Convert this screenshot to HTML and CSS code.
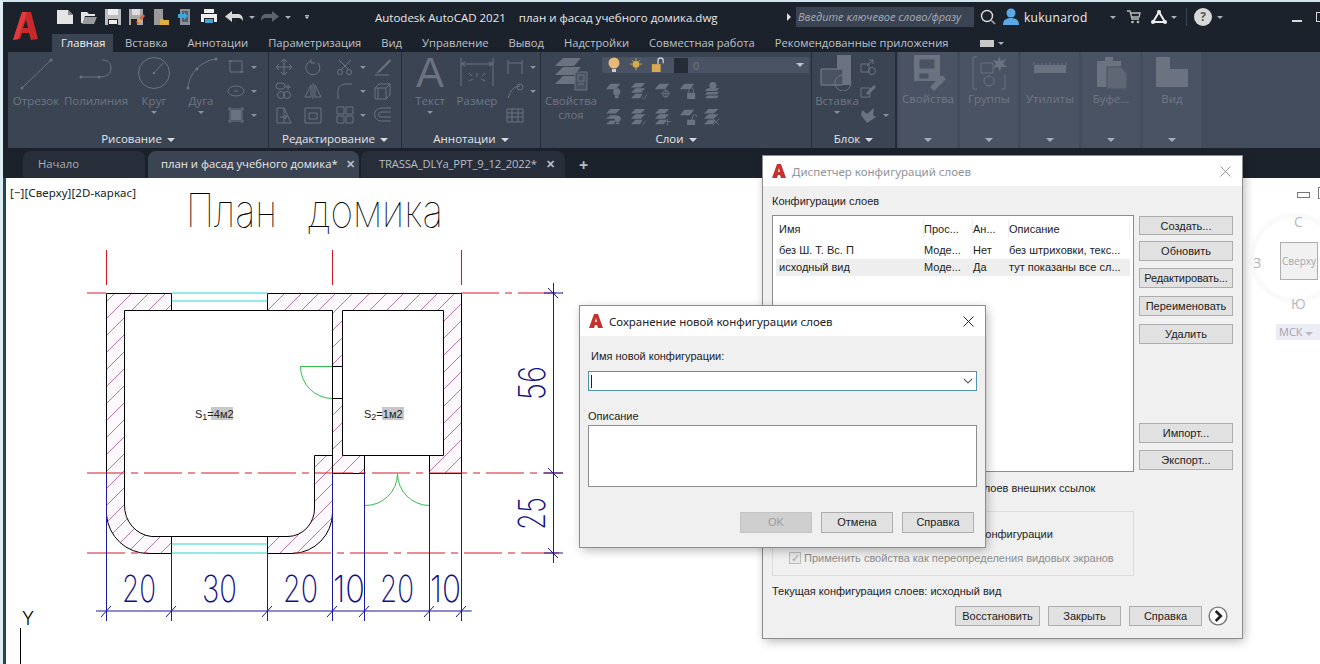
FILE: index.html
```html
<!DOCTYPE html>
<html lang="ru">
<head>
<meta charset="utf-8">
<title>Autodesk AutoCAD 2021</title>
<link rel="stylesheet" href="styles.css">
</head>
<body>
<div class="app">
  <header class="titlebar">
    <svg class="logo" viewBox="0 0 28 30"><path d="M10 1h9l7 27-7 1-2-7h-7l-2 6-7 1z" fill="#c62a2a"/><path d="M10 1h5L6 28l-5 1z" fill="#e23b3b"/><path d="M11 17h5l-2-8z" fill="#1c222c"/></svg>
    <div class="qat">
      <svg class="qi" viewBox="0 0 16 16"><path d="M0 1h11l5 5v9H0z" fill="#e4e4e4"/><path d="M11 1v5h5z" fill="#888"/></svg>
      <svg class="qi" viewBox="0 0 16 16"><path d="M0 3h6l2 2h6v2H4L2 14H0z" fill="#e4e4e4"/><path d="M4 8h12l-3 7H1z" fill="#9a9a9a"/></svg>
      <svg class="qi" viewBox="0 0 16 16"><path d="M0 0h16v16H0z" fill="#bdbdbd"/><path d="M3 0h10v6H3z" fill="#eee"/><path d="M3 10h10v6H3z" fill="#222"/><path d="M4 11h8v4H4z" fill="#eee"/></svg>
      <svg class="qi" viewBox="0 0 16 16"><path d="M0 0h14v16H0z" fill="#a8a8a8"/><path d="M3 0h8v6H3z" fill="#ddd"/><path d="M2 10h6v6H2z" fill="#222"/><path d="M7 13l7-8 2 2-7 8z" fill="#d9634a"/><path d="M10 9l3 3-2 2-3-2z" fill="#e0b060"/></svg>
      <svg class="qi" viewBox="0 0 16 16"><path d="M1 0h9v16H1z" fill="#9a9a9a"/><path d="M7 10h3l1 1h5v5H7z" fill="#e3ac3c"/></svg>
      <svg class="qi" viewBox="0 0 16 16"><path d="M3 0h10v16H3z" fill="#8a9099"/><path d="M5 2h6v11H5z" fill="#565d68"/><path d="M1 5h6V3l4 4-4 4V9H1z" fill="#3aa7dc"/></svg>
      <svg class="qi" viewBox="0 0 16 16"><path d="M3 0h10v4H3zM0 5h16v8H0z" fill="#eee"/><path d="M3 9h10v6H3z" fill="#1c222c"/><path d="M4 10h8v4H4z" fill="#4aa3cc"/></svg>
      <svg class="qi-wide" viewBox="0 0 18 12"><path d="M7 0v3h6c3 0 5 2 5 7-2-3-3-3-5-3H7v4L0 5.500z" fill="#d9d9d9"/></svg>
      <span class="caret light"></span>
      <svg class="qi-wide" viewBox="0 0 18 12"><path d="M11 0v3H5C2 3 0 5 0 10c2-3 3-3 5-3h6v4l7-5.500z" fill="#5d6470"/></svg>
      <span class="caret light"></span>
      <svg class="qi-menu" viewBox="0 0 10 10"><path d="M0 0h10v2H0z" fill="#ddd"/><path d="M0 4h10L5 10z" fill="#ddd"/></svg>
    </div>
    <div class="app-title"><span>Autodesk AutoCAD 2021</span><span>план и фасад учебного домика.dwg</span></div>
    <div class="search-wrap">
      <span class="play"></span>
      <div class="search">Введите ключевое слово/фразу</div>
      <svg class="tb-search" viewBox="0 0 16 16"><circle cx="7" cy="7" r="5.500" fill="none" stroke="#ddd" stroke-width="1.400"/><path d="M11 11l4 4" stroke="#aaa" stroke-width="1.600"/></svg>
      <svg class="tb-user" viewBox="0 0 18 18"><circle cx="9" cy="5" r="4.500" fill="#5aa9e6"/><path d="M1 17c0-5 3-7 8-7s8 2 8 7z" fill="#5aa9e6"/></svg>
      <span class="username">kukunarod</span>
      <span class="caret light user-caret"></span>
      <svg class="tb-cart" viewBox="0 0 14 14"><path d="M0 1h3l2 8h7M4 3h9l-1 4H5" fill="none" stroke="#bbb" stroke-width="1.300"/><circle cx="5.500" cy="12" r="1.300" fill="#bbb"/><circle cx="11" cy="12" r="1.300" fill="#bbb"/></svg>
      <svg class="tb-a360" viewBox="0 0 16 14"><path d="M8 2L2 12h12z" fill="none" stroke="#eee" stroke-width="2"/><circle cx="8" cy="2" r="2" fill="#eee"/><circle cx="2" cy="12" r="2" fill="#eee"/><circle cx="14" cy="12" r="2" fill="#eee"/></svg>
      <span class="caret light"></span>
      <span class="tb-sep"></span>
      <span class="help">?</span>
      <span class="caret light"></span>
      <span class="win-min"></span>
      <span class="win-max"></span>
    </div>
  </header>

  <nav class="ribbon-tabs">
    <span class="rtab active">Главная</span>
    <span class="rtab">Вставка</span>
    <span class="rtab">Аннотации</span>
    <span class="rtab">Параметризация</span>
    <span class="rtab">Вид</span>
    <span class="rtab">Управление</span>
    <span class="rtab">Вывод</span>
    <span class="rtab">Надстройки</span>
    <span class="rtab">Совместная работа</span>
    <span class="rtab">Рекомендованные приложения</span>
    <span class="rtab-extra"><span class="rtab-icon"></span><span class="caret light"></span></span>
  </nav>

  <section class="ribbon">
    <div class="panel p-draw">
      <div class="panel-body">
        <div class="tool w56"><svg class="big" viewBox="0 0 36 36"><path d="M4 33L33 5"/><circle cx="4" cy="33" r="1.500" class="f"/><circle cx="33" cy="5" r="1.500" class="f"/></svg><span class="lbl">Отрезок</span></div>
        <div class="tool w64"><svg class="big" viewBox="0 0 36 36"><path d="M3 22h18c8 0 12-3 12-9s-4-8-9-8"/><circle cx="3" cy="22" r="1.500" class="f"/><circle cx="21" cy="22" r="1.500" class="f"/></svg><span class="lbl">Полилиния</span></div>
        <div class="tool w52"><svg class="big" viewBox="0 0 36 36"><circle cx="18" cy="18" r="15.500"/><path d="M18 18L27 8"/><circle cx="18" cy="18" r="1.300" class="f"/></svg><span class="lbl">Круг</span><span class="caret"></span></div>
        <div class="tool w42"><svg class="big" viewBox="0 0 36 36"><path d="M5 33C6 18 18 6 33 4"/><circle cx="5" cy="33" r="1.500" class="f"/><circle cx="33" cy="4" r="1.500" class="f"/><circle cx="14" cy="14" r="1.500" class="f"/></svg><span class="lbl">Дуга</span><span class="caret"></span></div>
        <div class="small-col draw-small">
          <div class="srow"><svg class="sm" viewBox="0 0 18 18"><path d="M3 3h12v11H3zM1 3h4M13 14h4"/></svg><span class="caret"></span></div>
          <div class="srow"><svg class="sm" viewBox="0 0 18 18"><ellipse cx="9" cy="9" rx="8" ry="5"/><path d="M7 9h4"/></svg><span class="caret"></span></div>
          <div class="srow"><svg class="sm" viewBox="0 0 18 18"><path d="M3 1v16M15 1v16M1 3h16M1 15h16"/><path d="M4 4h10v10H4z" class="f"/></svg><span class="caret"></span></div>
        </div>
      </div>
      <div class="panel-title">Рисование <span class="caret title-caret"></span></div>
    </div>

    <div class="panel p-edit">
      <div class="panel-body">
        <div class="edit-grid">
          <svg class="sm" viewBox="0 0 18 18"><path d="M9 1v16M1 9h16M9 1L6 4M9 1l3 3M9 17l-3-3M9 17l3-3M1 9l3-3M1 9l3 3M17 9l-3-3M17 9l-3 3"/></svg>
          <svg class="sm" viewBox="0 0 18 18"><path d="M14 5a7 7 0 1 1-7-2M7 1v4h4"/></svg>
          <div class="srow"><svg class="sm" viewBox="0 0 18 18"><path d="M3 2l10 10M15 2L5 12"/><circle cx="4" cy="14" r="2.500"/><circle cx="13" cy="14" r="2.500"/></svg><span class="caret"></span></div>
          <svg class="sm" viewBox="0 0 18 18"><path d="M16 1L5 12l-3 4 4-2L17 3z" class="f"/><path d="M1 17h14"/></svg>

          <svg class="sm" viewBox="0 0 18 18"><rect x="1" y="1" width="9" height="6" rx="3"/><circle cx="6" cy="13" r="3.500"/><circle cx="12" cy="13" r="3.500"/><path d="M13 2v6M10 5h6"/></svg>
          <svg class="sm" viewBox="0 0 18 18"><path d="M9 1v16M7 3L1 15h6zM11 3l6 12h-6z"/></svg>
          <div class="srow"><svg class="sm" viewBox="0 0 18 18"><path d="M2 17V9c0-5 4-7 8-7h6"/></svg><span class="caret"></span></div>
          <svg class="sm" viewBox="0 0 18 18"><path d="M1 6h11v11H1zM1 6l4-4h11v11l-4 4M12 6l4-4M4 6v11"/></svg>

          <svg class="sm" viewBox="0 0 18 18"><path d="M2 2h7v15H2zM9 2l7 15H9M5 11h7M10 9l2 2-2 2"/></svg>
          <svg class="sm" viewBox="0 0 18 18"><path d="M1 2h16v15H1zM5 7h8v6H5v-6"/></svg>
          <div class="srow"><svg class="sm" viewBox="0 0 18 18"><path d="M1 1h7v7H1zM10 1h7v7h-7zM1 10h7v7H1zM10 10h7v7h-7z"/></svg><span class="caret"></span></div>
          <svg class="sm" viewBox="0 0 18 18"><path d="M17 2H7a6 6 0 0 0 0 13h10M17 6H7a2.500 2.500 0 0 0 0 5h10"/></svg>
        </div>
      </div>
      <div class="panel-title">Редактирование <span class="caret title-caret"></span></div>
    </div>

    <div class="panel p-annot">
      <div class="panel-body">
        <div class="tool w56"><span class="big-a">A</span><span class="lbl">Текст</span><span class="caret"></span></div>
        <div class="tool w38"><svg class="big" viewBox="0 0 36 36"><path d="M2 3v28M34 3v28M2 9h32M2 9l4-2M2 9l4 2M34 9l-4-2M34 9l-4 2M10 26l4-2M26 26l-4-2M18 22v-4M13 21l-3-3M23 21l3-3"/></svg><span class="lbl">Размер</span></div>
        <div class="small-col annot-small">
          <div class="srow"><svg class="sm" viewBox="0 0 18 18"><path d="M2 2v14M16 2v14M2 5h14"/></svg><span class="caret"></span></div>
          <div class="srow"><svg class="sm" viewBox="0 0 18 18"><path d="M2 16c3-8 5-11 12-12"/><circle cx="14" cy="5" r="3"/></svg><span class="caret"></span></div>
          <div class="srow"><svg class="sm" viewBox="0 0 18 18"><path d="M1 3h16v13H1zM1 7h16M1 11h16M6 3v13M12 3v13"/></svg></div>
        </div>
      </div>
      <div class="panel-title">Аннотации <span class="caret title-caret"></span></div>
    </div>

    <div class="panel p-layers">
      <div class="panel-body">
        <div class="tool w60"><svg class="big" viewBox="0 0 36 36"><path d="M10 3h18l-7 8H2z" class="f"/><path d="M10 12h18l-7 8H2z" class="f"/><path d="M10 21h14l-3 8H2z" class="f"/><path d="M22 17h12v18H22z" class="dark"/><path d="M25 20h6v6h-6zM25 29h6"/></svg><span class="lbl two">Свойства<br>слоя</span></div>
        <div class="layer-col">
          <div class="layer-select">
            <svg class="li" viewBox="0 0 14 16"><circle cx="7" cy="6" r="5.500" fill="#e8b874"/><path d="M5 12h4v3H5z" fill="#ccc"/></svg>
            <svg class="li" viewBox="0 0 16 16"><circle cx="8" cy="7" r="4" fill="#d5a84a"/><path d="M8 0v3M8 11v3M1 7h3M12 7h3M3 2l2 2M13 2l-2 2" stroke="#d5a84a" stroke-width="1"/></svg>
            <svg class="li" viewBox="0 0 16 16"><rect x="1" y="7" width="10" height="9" fill="#d9a84f"/><path d="M8 7V3a3 3 0 0 1 6 0v3" fill="none" stroke="#c9ccd1" stroke-width="1.500"/></svg>
            <span class="swatch"></span>
            <span class="zero">0</span>
            <span class="caret sel-caret"></span>
          </div>
          <div class="layer-icons">
            <svg class="li2" viewBox="0 0 20 20"><path d="M6 2h11l-5 6H1z" class="f"/><circle cx="13" cy="11" r="4" class="f"/><path d="M11 15h4v3h-4z" class="f"/></svg>
            <svg class="li2" viewBox="0 0 20 20"><path d="M6 1h11l-5 5H1zM6 7h11l-5 5H1zM6 13h8l-3 5H1z" class="f"/><path d="M13 17l2 2 4-5"/></svg>
            <svg class="li2" viewBox="0 0 20 20"><path d="M6 2h11l-5 6H1z" class="f"/><circle cx="13" cy="13" r="3.500"/><path d="M13 8v10M8 13h10"/></svg>
            <svg class="li2" viewBox="0 0 20 20"><path d="M6 2h11l-5 6H1z" class="f"/><path d="M9 12h9v7H9z" class="f"/><path d="M11 12V9a2.500 2.500 0 0 1 5 0v3"/></svg>
            <svg class="li2" viewBox="0 0 20 20"><circle cx="11" cy="4" r="4" class="f"/><path d="M5 7h13l-3 3H2zM5 11h13l-3 3H2zM5 15h13l-3 3H2z" class="f"/></svg>
            <svg class="li2" viewBox="0 0 20 20"><path d="M6 1h11l-5 5H1zM6 8h8l-3 4H1zM6 14h6l-2 4H1z" class="f"/><circle cx="14" cy="12" r="3.500" class="f"/><path d="M12 16h4v2h-4z" class="f"/></svg>
            <svg class="li2" viewBox="0 0 20 20"><path d="M6 1h11l-5 5H1zM6 7h11l-5 5H1zM6 13h8l-3 5H1z" class="f"/><path d="M13 19l5-5"/></svg>
            <svg class="li2" viewBox="0 0 20 20"><path d="M6 1h11l-5 5H1zM6 7h11l-5 5H1zM6 13h8l-3 5H1z" class="f"/><path d="M15 12v7M12 15h7"/></svg>
            <svg class="li2" viewBox="0 0 20 20"><path d="M6 2h11l-5 6H1z" class="f"/><path d="M9 13h9v6H9z" class="f"/><path d="M15 13v-3a2.500 2.500 0 0 1 5 0"/></svg>
            <svg class="li2" viewBox="0 0 20 20"><path d="M6 1h11l-5 5H1zM6 7h11l-5 5H1zM6 13h8l-3 5H1z" class="f"/><path d="M11 12l7 7M18 12l-7 7"/></svg>
          </div>
        </div>
      </div>
      <div class="panel-title">Слои <span class="caret title-caret"></span></div>
    </div>

    <div class="panel p-block">
      <div class="panel-body">
        <div class="tool w50"><svg class="big" viewBox="0 0 36 36"><path d="M18 0h14v30H18z" class="f"/><path d="M2 14h22v16H2z" class="dark"/><path d="M2 14h22v16H2z"/><circle cx="24" cy="28" r="8"/></svg><span class="lbl">Вставка</span><span class="caret"></span></div>
        <div class="small-col block-small">
          <div class="srow"><svg class="sm" viewBox="0 0 18 18"><path d="M2 6h8v8H2z"/><path d="M8 8l6-6M14 2h-4M14 2v4"/><circle cx="13" cy="13" r="3.500"/></svg></div>
          <div class="srow"><svg class="sm" viewBox="0 0 18 18"><path d="M2 6h9v9H2z"/><path d="M7 11L15 3l2 2-8 8z" class="f"/></svg></div>
          <div class="srow"><svg class="sm" viewBox="0 0 18 18"><path d="M3 4l5 4 7-6-1 7 3 2-9 6-6-8z" class="f"/></svg><span class="caret"></span></div>
        </div>
      </div>
      <div class="panel-title">Блок <span class="caret title-caret"></span></div>
    </div>

    <div class="collapsed">
      <svg class="big" viewBox="0 0 36 36"><path d="M4 0h26v26H4z" class="f"/><path d="M9 4h16v10H9z" class="dark"/><path d="M9 18h10v6H9z" class="dark"/><path d="M20 32l12-12 4 4-12 12z" class="f"/></svg>
      <span class="lbl">Свойства</span><span class="caret coll-caret"></span>
    </div>
    <div class="collapsed">
      <svg class="big" viewBox="0 0 36 36"><path d="M6 2H2v32h4M30 34h4V20"/><path d="M10 8h12v10H10z"/><circle cx="18" cy="26" r="5"/><path d="M28 1l2 5 5-2-3 5 4 3-6 0-1 5-2-5-5 1 3-4-3-4 5 1z" class="f"/></svg>
      <span class="lbl">Группы</span><span class="caret coll-caret"></span>
    </div>
    <div class="collapsed">
      <svg class="big" viewBox="0 0 36 36"><path d="M2 10h32v8H2z" class="f"/><path d="M2 10v-3M6 10V8M10 10V8M14 10V8M18 10V7M22 10V8M26 10V8M30 10V8M34 10V7"/></svg>
      <span class="lbl">Утилиты</span><span class="caret coll-caret"></span>
    </div>
    <div class="collapsed">
      <svg class="big" viewBox="0 0 36 36"><path d="M4 6h24v26H4z" class="f"/><path d="M12 2h8v6h-8z" class="f"/><path d="M14 12h14l6 7v15H14z" class="f2"/></svg>
      <span class="lbl">Буфе...</span><span class="caret coll-caret"></span>
    </div>
    <div class="collapsed">
      <svg class="big" viewBox="0 0 36 36"><path d="M2 2h14v12h18v18H2z" class="f"/></svg>
      <span class="lbl">Вид</span><span class="caret coll-caret"></span>
    </div>
  </section>

  <nav class="doc-tabs">
    <span class="dtab start">Начало</span>
    <span class="dtab active-doc">план и фасад учебного домика*<span class="dclose">✕</span></span>
    <span class="dtab other">TRASSA_DLYa_PPT_9_12_2022*<span class="dclose">✕</span></span>
    <span class="dplus">+</span>
  </nav>

  <main class="canvas">
    <svg class="drawing" viewBox="6 178 1314 486">
      <defs>
        <pattern id="hatch" patternUnits="userSpaceOnUse" width="17" height="17">
          <rect width="17" height="17" fill="#fcf8fc"/>
          <path d="M-1 18L18 -1" stroke="#a0558c" stroke-width=".8"/>
        </pattern>
      </defs>
      <text class="title-text" x="186" y="227" textLength="91" lengthAdjust="spacingAndGlyphs">План</text>
      <text class="title-text" x="308" y="227" textLength="135" lengthAdjust="spacingAndGlyphs">домика</text>

      <path class="wall" d="M106.500 293.500H171.500V310.500H124.500V505A30 31 0 0 0 151.500 536.500H171.500V553.500H148A42 42 0 0 1 106.500 515Z"/>
      <path class="wall" d="M267.500 293.500H461.500V473.500H429.500V455.500H443.500V310.500H342.500V455.500H364.500V473.500H332.500V513A41 41 0 0 1 293 553.500H267.500V536.500H288A27 28 0 0 0 314.500 508V455.500H332.500V310.500H267.500Z"/>
      <rect x="333" y="367" width="9" height="31" fill="#fff"/>
      <path class="blk" d="M171.500 310.500H267.500M151.500 536.500H288M332.500 366.500H342.500M332.500 398.500H342.500M332.500 366V398M332.500 455V473M364.500 455.500H429.500"/>
      <g class="red">
        <path d="M106.500 250v35M332.500 250v35M461.500 250v35"/>
        <path class="dash" d="M87 293H106M461 293H563M87 473H563M87 553H148M293 553H563"/>
      </g>
      <path class="cyan" d="M171.500 293H267.500M171.500 301H267.500M171.500 544H267.500M171.500 553H267.500"/>
      <path class="green" d="M332 366.500H300.500A32 32 0 0 0 332 398.500M397.500 474A32 32 0 0 1 364.500 505.500M397.500 474A32 32 0 0 0 429.500 505.500"/>

      <g class="blue">
        <path d="M106.500 473V621M171.500 553V621M267.500 553V621M332.500 473V621M364.500 473V621M429.500 473V621M461.500 473V621"/>
        <path class="blue-h" d="M96 611H471.700M544 293h19M544 473h19M544 553h19"/>
        <path d="M553.500 283V563"/>
        <path d="M101 617l10-11M166 617l10-11M262 617l10-11M327 617l10-11M359 617l10-11M424 617l10-11M456 617l10-11"/>
        <path d="M548 288l10 10M548 468l10 10M548 548l10 10"/>
      </g>
      <g class="dim-text">
        <text x="122" y="602" textLength="34" lengthAdjust="spacingAndGlyphs">20</text>
        <text x="202" y="602" textLength="35" lengthAdjust="spacingAndGlyphs">30</text>
        <text x="283" y="602" textLength="35" lengthAdjust="spacingAndGlyphs">20</text>
        <text x="333" y="602" textLength="32" lengthAdjust="spacingAndGlyphs">10</text>
        <text x="380" y="602" textLength="34" lengthAdjust="spacingAndGlyphs">20</text>
        <text x="430" y="602" textLength="31" lengthAdjust="spacingAndGlyphs">10</text>
        <text transform="translate(545 400) rotate(-90)" textLength="34" lengthAdjust="spacingAndGlyphs">56</text>
        <text transform="translate(545 530) rotate(-90)" textLength="33" lengthAdjust="spacingAndGlyphs">25</text>
      </g>
      <rect x="211" y="407" width="22" height="13" fill="#c8c8c8"/>
      <rect x="382" y="407" width="22" height="13" fill="#c8c8c8"/>
      <text class="area" x="195" y="418">S<tspan class="sub" dy="2">1</tspan><tspan dy="-2">=4м2</tspan></text>
      <text class="area" x="364" y="418">S<tspan class="sub" dy="2">2</tspan><tspan dy="-2">=1м2</tspan></text>

      <text class="ucs" x="22" y="625">Y</text>
      <path class="blk" d="M20.500 628V664"/>
    </svg>

    <div class="view-label">[−][Сверху][2D-каркас]</div>

    <div class="cube">
      <span class="cube-min"></span><span class="cube-max"></span>
      <span class="cube-ring"></span>
      <span class="cube-n">С</span>
      <span class="cube-w">З</span>
      <span class="cube-face">Сверху</span>
      <span class="cube-s">Ю</span>
      <span class="cube-wcs">МСК <i class="cube-caret"></i></span>
    </div>
  </main>

  <section class="dialog manager">
    <div class="dlg-title dim">
      <svg class="dlg-logo" viewBox="0 0 14 14"><path d="M5 0h4l5 14H9l-1-3H6l-1 3H0z" fill="#c4332e"/><path d="M6 8h2L7 4z" fill="#fff"/></svg>
      <span>Диспетчер конфигураций слоев</span>
      <svg class="dlg-x faint" viewBox="0 0 11 11"><path d="M.5 .5l10 10M10.500 .5l-10 10"/></svg>
    </div>
    <div class="mgr-body">
      <div class="mgr-head">Конфигурации слоев</div>
      <div class="mgr-main">
        <div class="list">
          <div class="list-row head"><span>Имя</span><span>Прос...</span><span>Ан...</span><span>Описание</span></div>
          <div class="list-row"><span>без Ш. Т. Вс. П</span><span>Моде...</span><span>Нет</span><span>без штриховки, текс...</span></div>
          <div class="list-row sel"><span>исходный вид</span><span>Моде...</span><span>Да</span><span>тут показаны все сл...</span></div>
        </div>
        <div class="mgr-buttons">
          <button class="btn b-create">Создать...</button>
          <button class="btn b-gap5">Обновить</button>
          <button class="btn b-gap7 tight">Редактировать...</button>
          <button class="btn b-gap8">Переименовать</button>
          <button class="btn b-gap8">Удалить</button>
          <button class="btn b-import">Импорт...</button>
          <button class="btn b-gap7">Экспорт...</button>
        </div>
      </div>
      <div class="opt-xref">Не перечислять конфигурации слоев внешних ссылок</div>
      <div class="opt-group">
        <div class="opt-line first">Отключить слои, не найденные в конфигурации</div>
        <div class="opt-line disabled"><span class="check">✓</span>Применить свойства как переопределения видовых экранов</div>
      </div>
      <div class="current-config">Текущая конфигурация слоев: исходный вид</div>
      <div class="mgr-foot">
        <button class="btn w85">Восстановить</button>
        <button class="btn w73">Закрыть</button>
        <button class="btn w73">Справка</button>
        <span class="more"><svg viewBox="0 0 18 18"><circle cx="9" cy="9" r="8" fill="#fff" stroke="#777" stroke-width="1.300"/><path d="M7 4.500L11.500 9 7 13.500" fill="none" stroke="#222" stroke-width="2.400"/></svg></span>
      </div>
    </div>
  </section>

  <section class="dialog saver">
    <div class="dlg-title">
      <svg class="dlg-logo" viewBox="0 0 14 14"><path d="M5 0h4l5 14H9l-1-3H6l-1 3H0z" fill="#c4332e"/><path d="M6 8h2L7 4z" fill="#fff"/></svg>
      <span>Сохранение новой конфигурации слоев</span>
      <svg class="dlg-x" viewBox="0 0 11 11"><path d="M.5 .5l10 10M10.500 .5l-10 10"/></svg>
    </div>
    <div class="saver-body">
      <div class="f-label name">Имя новой конфигурации:</div>
      <div class="combo"><span class="cursor"></span><svg class="combo-arrow" viewBox="0 0 10 6"><path d="M1 1l4 4 4-4" fill="none" stroke="#666" stroke-width="1.200"/></svg></div>
      <div class="f-label desc">Описание</div>
      <div class="textarea"></div>
      <div class="saver-foot">
        <button class="btn w72 off">OK</button>
        <button class="btn w72">Отмена</button>
        <button class="btn w72">Справка</button>
      </div>
    </div>
  </section>
</div>
</body>
</html>
```
FILE: styles.css
```css
* { box-sizing: border-box; }
html, body { margin: 0; padding: 0; }
body { width: 1320px; height: 664px; overflow: hidden; background: #fff; font-family: "Open Sans", "Noto Sans", sans-serif; }
.app { position: relative; width: 1320px; height: 664px; display: flex; flex-direction: column; background: #1c222c; overflow: hidden; border-top: 2px solid #cfe6ef; border-left: 3px solid #dfeef3; }

.caret { display: inline-block; width: 0; height: 0; border-left: 3px solid transparent; border-right: 3px solid transparent; border-top: 3px solid #8a92a0; flex: none; }
.caret.light { border-top-color: #aab0ba; }

.titlebar { height: 28px; flex: none; display: flex; align-items: center; color: #e6e6e6; position: relative; padding-top: 2px; }
.logo { width: 28px; height: 30px; margin: 18px 0 0 9px; position: relative; z-index: 2; flex: none; }
.qat { display: flex; align-items: center; margin-left: 17px; flex: none; width: 252px; }
.qi { width: 16px; height: 16px; margin-right: 8px; flex: none; }
.qi-wide { width: 18px; height: 12px; margin-right: 5px; flex: none; }
.qat .caret { margin-right: 6px; margin-left: 1px; }
.qi-menu { width: 10px; height: 10px; margin-left: 8px; }
.app-title { display: flex; gap: 13px; font-size: 11.500px; margin-left: 66px; color: #e8e8e8; width: 412px; white-space: nowrap; flex: none; }
.search-wrap { display: flex; align-items: center; flex: none; }
.play { width: 0; height: 0; border-left: 4px solid #ddd; border-top: 4px solid transparent; border-bottom: 4px solid transparent; margin-right: 5px; }
.search { width: 178px; height: 20px; background: #3b4453; color: #a6acb6; font-style: italic; font-size: 11px; line-height: 20px; padding-left: 2px; white-space: nowrap; overflow: hidden; }
.tb-search { width: 16px; height: 16px; margin-left: 6px; }
.tb-user { width: 18px; height: 18px; margin-left: 6px; }
.username { font-size: 12px; letter-spacing: .3px; margin-left: 4px; width: 86px; color: #eee; }
.user-caret { margin-right: 11px; }
.tb-cart { width: 14px; height: 14px; margin-right: 10px; }
.tb-a360 { width: 16px; height: 14px; margin-right: 4px; }
.tb-sep { width: 1px; height: 18px; background: #3d4552; margin: 0 7px 0 9px; }
.help { width: 18px; height: 18px; border-radius: 50%; background: #d8d8d8; color: #555; font-size: 12px; font-weight: 700; line-height: 18px; text-align: center; margin-right: 5px; }
.win-min { width: 10px; height: 2px; background: #d8d8d8; margin: 8px 0 0 69px; }
.win-max { width: 10px; height: 10px; border: 1px solid #d8d8d8; margin-left: 14px; }

.ribbon-tabs { height: 22px; flex: none; display: flex; align-items: center; padding-left: 49px; color: #bcc1c9; font-size: 11.200px; white-space: nowrap; }
.rtab { height: 18px; line-height: 17px; margin-top: 4px; padding: 0 10px; }
.rtab.active { background: #3b4453; color: #f0f0f0; padding: 0 9px; width: 61px; margin-right: 2px; text-align: center; }
.rtab-extra { display: flex; align-items: center; gap: 4px; margin: 4px 0 0 22px; }
.rtab-icon { width: 14px; height: 7px; background: #c8c8c8; }

.ribbon { height: 96px; flex: none; margin-left: 5px; display: flex; background: #434c5c; color: #6f7784; }
.panel { display: flex; flex-direction: column; background: #3b4453; border-right: 1px solid #262c37; flex: none; }
.p-draw { width: 261px; }
.p-edit { width: 133px; }
.p-annot { width: 139px; }
.p-layers { width: 271px; }
.p-block { width: 85px; border-right: 2px solid #262c37; }
.panel-body { flex: 1; display: flex; padding-top: 3px; min-height: 0; }
.panel-title { height: 19px; flex: none; text-align: center; color: #e3e5e8; font-size: 11.500px; line-height: 19px; white-space: nowrap; }
.title-caret { border-left-width: 4px; border-right-width: 4px; border-top: 4px solid #d8dade; margin: 0 0 1px 2px; }

.big, .sm, .li2 { fill: none; stroke: #6b7380; stroke-width: 1; flex: none; }
.big { width: 36px; height: 36px; }
.sm { width: 18px; height: 18px; }
.big .f, .sm .f, .li2 .f { fill: #6b7380; stroke: none; }
.big .f2 { fill: #5f6775; stroke: #4a5364; }
.big .dark { fill: #4a5364; stroke: #6b7380; }
.tool { display: flex; flex-direction: column; align-items: center; flex: none; }
.tool .caret { margin-top: 3px; }
.w56 { width: 56px; } .w64 { width: 64px; } .w52 { width: 52px; } .w42 { width: 42px; }
.w38 { width: 38px; } .w60 { width: 60px; } .w50 { width: 50px; }
.lbl { font-size: 11.500px; line-height: 14px; margin-top: 3px; color: #6f7784; white-space: nowrap; text-align: center; }
.big-a { font-family: "Liberation Sans", sans-serif; font-size: 42px; line-height: 36px; height: 36px; color: #6b7380; }
.small-col { display: grid; grid-template-rows: repeat(3, 24px); flex: none; }
.srow { display: flex; align-items: center; gap: 6px; }
.draw-small { padding-left: 5px; }
.annot-small { padding-left: 10px; }
.block-small { margin-left: -3px; }
.edit-grid { display: grid; grid-template-columns: 29px 30px 44px 22px; grid-template-rows: repeat(3, 24px); align-items: center; justify-items: center; }
.edit-grid .srow { padding-left: 1px; }

.layer-col { display: flex; flex-direction: column; padding-left: 1px; }
.layer-select { width: 207px; height: 20px; margin-top: 2px; background: #4a5364; display: flex; align-items: center; padding: 0 5px 0 5px; gap: 8px; }
.li { width: 14px; height: 16px; flex: none; }
.swatch { width: 14px; height: 15px; background: #262c37; margin-left: 1px; }
.zero { color: #6f7784; font-size: 11px; margin-left: -3px; flex: 1; }
.sel-caret { border-left-width: 4px; border-right-width: 4px; border-top: 4px solid #bcc1c9; }
.layer-icons { display: grid; grid-template-columns: repeat(5, 18px); column-gap: 6.500px; grid-auto-rows: 26px; margin: 5px 0 0 3px; align-items: center; }
.li2 { width: 18px; height: 18px; }

.collapsed { width: 58px; background: #4a5364; margin-left: 3px; flex: none; display: flex; flex-direction: column; align-items: center; padding-top: 3px; position: relative; }
.p-block + .collapsed { margin-left: 2px; }
.collapsed .lbl { margin-top: 1px; }
.coll-caret { margin-top: auto; margin-bottom: 6px; border-left-width: 4px; border-right-width: 4px; border-top: 4px solid #a7adb7; }

.doc-tabs { height: 30px; flex: none; display: flex; align-items: flex-end; font-size: 11.300px; color: #b8bdc5; white-space: nowrap; position: relative; }
.dtab { height: 27px; line-height: 26px; display: block; border-radius: 8px 8px 0 0; flex: none; position: relative; }
.start { width: 122px; margin-left: 20px; padding-left: 15px; background: #282e39; color: #a8adb6; }
.active-doc { width: 211px; margin-left: 3px; padding-left: 13px; background: #3b4453; color: #e8e8e8; }
.other { width: 204px; margin-left: 2px; padding-left: 18px; background: #282e39; letter-spacing: -.18px; }
.dclose { position: absolute; right: 4px; top: 0; font-size: 11px; font-weight: 700; color: #b8bdc5; }
.other .dclose { right: 10px; }
.dplus { margin-left: 14px; font-size: 16px; font-weight: 700; line-height: 26px; color: #b8bdc5; }

.canvas { flex: 1; position: relative; background: #fff; border-left: 3px solid #28464f; min-height: 0; }
.drawing { position: absolute; left: 0; top: 0; width: 1314px; height: 486px; }
.title-text { font-family: Inter, Roboto, sans-serif; font-weight: 100; font-size: 46px; fill: #000; }
.red path { fill: none; stroke: #d41c26; stroke-width: 1.100; }
.red .dash { stroke-dasharray: 38 6 7 6; }
.wall { fill: url(#hatch); stroke: #000; stroke-width: 1; }
.blk { fill: none; stroke: #000; stroke-width: 1; }
.cyan { fill: none; stroke: #2fd6ca; stroke-width: 1.200; }
.green { fill: none; stroke: #2fc04a; stroke-width: 1; }
.blue path { fill: none; stroke: #1a1a9c; stroke-width: 1; }
.blue .blue-h { stroke-width: 1.200; }
.dim-text { font-family: Inter, Roboto, sans-serif; font-weight: 150; font-size: 37px; fill: #10108a; }
.area { font-family: "Liberation Sans", sans-serif; font-size: 11px; fill: #222; }
.sub { font-size: 9px; }
.ucs { font-family: Inter, Roboto, sans-serif; font-weight: 300; font-size: 18px; fill: #000; }
.view-label { position: absolute; left: 4px; top: 7px; font-family: "Noto Sans", sans-serif; font-size: 11.500px; line-height: 15px; letter-spacing: .1px; color: #222; white-space: nowrap; }

.cube { position: absolute; left: 0; top: 0; width: 100%; height: 100%; color: #b4b8bc; font-size: 14px; pointer-events: none; }
.cube span { position: absolute; }
.cube-ring { left: 1244px; top: 35px; width: 90px; height: 90px; border: 5px solid #fafafa; border-radius: 50%; }
.cube-min { left: 1291px; top: 14px; width: 13px; height: 6px; border: 1px solid #777; }
.cube-max { left: 1312px; top: 9px; width: 8px; height: 12px; border: 1px solid #777; }
.cube-n { left: 1288px; top: 34px; }
.cube-w { left: 1247px; top: 75px; }
.cube-s { left: 1285px; top: 116px; }
.cube-face { left: 1274px; top: 64px; width: 38px; height: 38px; background: #f1f1f1; border: 1px solid #aeaeae; font-size: 10px; line-height: 36px; text-align: center; color: #a4a8ae; white-space: nowrap; }
.cube-wcs { left: 1270px; top: 146px; width: 44px; height: 16px; background: #ececf6; font-size: 11px; line-height: 16px; padding-left: 3px; white-space: nowrap; color: #9fa3ad; }
.cube-caret { display: inline-block; width: 0; height: 0; border-left: 4px solid transparent; border-right: 4px solid transparent; border-top: 4px solid #bbb; }

.dialog { position: absolute; background: #f0f0f0; box-shadow: 0 0 0 1px #8c8c8c, 2px 3px 10px rgba(0,0,0,.3); font-family: "Liberation Sans", sans-serif; font-size: 11px; color: #222; }
.manager { left: 760px; top: 154px; width: 479px; height: 482px; }
.saver { left: 577px; top: 304px; width: 405px; height: 241px; }
.dlg-title { height: 30px; background: #fff; display: flex; align-items: center; padding: 0 11px 0 9px; font-family: "Noto Sans", sans-serif; font-size: 11.500px; color: #222; position: relative; }
.dlg-title.dim { color: #8f9399; }
.dlg-logo { width: 14px; height: 14px; margin-right: 6px; flex: none; }
.dlg-x { width: 11px; height: 11px; margin-left: auto; flex: none; fill: none; stroke: #222; stroke-width: 1; }
.dlg-x.faint { stroke: #9a9a9a; }

.mgr-body { padding: 8px 9px 0; display: flex; flex-direction: column; }
.mgr-head { line-height: 14px; }
.mgr-main { display: flex; margin-top: 7px; gap: 5px; }
.list { width: 362px; height: 257px; background: #fff; border: 1px solid #8c8c8c; padding: 4px 3px 0; }
.list-row { display: grid; grid-template-columns: 145px 49px 36px 1fr; height: 17px; line-height: 17px; padding-left: 3px; white-space: nowrap; }
.list-row.head { height: 22px; line-height: 18px; }
.list-row.head span { border-right: 1px solid #eee; height: 18px; }
.list-row.sel { background: #eeeeee; }
.mgr-buttons { display: flex; flex-direction: column; width: 94px; padding-top: 1px; }
.btn { display: block; padding: 0; background: #e1e1e1; border: 1px solid #adadad; font: 11px/18px "Liberation Sans", sans-serif; color: #222; text-align: center; height: 20px; white-space: nowrap; flex: none; }
.mgr-buttons .btn { width: 94px; }
.b-create { height: 19px; }
.b-gap5 { margin-top: 6px; }
.b-gap7 { margin-top: 7px; }
.b-gap8 { margin-top: 8px; }
.b-import { margin-top: 79px; }
.tight { letter-spacing: -.1px; }
.opt-xref { margin: 9px 0 0 46px; line-height: 14px; white-space: nowrap; }
.opt-group { width: 362px; height: 65px; margin-top: 16px; border: 1px solid #dcdcdc; padding: 15px 0 0 16px; }
.opt-line { line-height: 14px; white-space: nowrap; display: flex; align-items: center; gap: 3px; }
.opt-line.first { margin-left: 18px; }
.opt-line.disabled { margin-top: 10px; color: #8c8c8c; }
.check { width: 12px; height: 12px; border: 1px solid #bcbcbc; font-size: 11px; line-height: 10px; text-align: center; color: #aaa; background: #e8e8e8; }
.current-config { margin-top: 8px; line-height: 14px; white-space: nowrap; }
.mgr-foot { display: flex; align-items: center; margin: 8px 0 0 183px; gap: 8px; }
.w85 { width: 85px; } .w73 { width: 73px; } .w72 { width: 72px; }
.more { width: 20px; height: 20px; margin-left: -2px; flex: none; }
.more svg { width: 20px; height: 20px; display: block; }

.saver-body { padding: 0 8px; display: flex; flex-direction: column; }
.f-label { line-height: 14px; }
.f-label.name { margin: 13px 0 0 3px; }
.combo { width: 389px; height: 20px; margin-top: 8px; background: #fff; border: 1px solid #4f93ad; display: flex; align-items: center; padding: 0 3px 0 2px; }
.cursor { width: 1px; height: 13px; background: #222; }
.combo-arrow { width: 10px; height: 6px; margin-left: auto; }
.f-label.desc { margin-top: 18px; }
.textarea { width: 389px; height: 62px; margin-top: 2px; background: #fff; border: 1px solid #8c8c8c; }
.saver-foot { display: flex; gap: 9px; margin: 25px 0 0 152px; }
.saver-foot .btn { height: 21px; line-height: 19px; }
.btn.off { background: #cfcfcf; border-color: #c4c4c4; color: #9a9a9a; }
```
